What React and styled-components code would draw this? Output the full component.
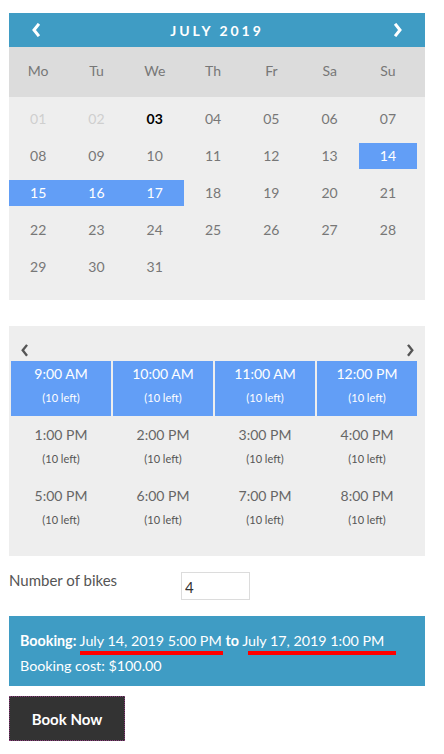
import React from 'react';
import styled, { createGlobalStyle } from 'styled-components';

const GlobalStyle = createGlobalStyle`
  body {
    margin: 0;
    background: #fff;
    font-family: Lato, "Open Sans", sans-serif;
  }
`;

const Page = styled.main`
  width: 416px;
  padding: 13px 19px 0 9px;
`;

const CalHeader = styled.div`
  height: 34px;
  background: #3f9cc4;
  display: flex;
  align-items: center;
  justify-content: space-between;
  padding: 0 22px;
  color: #fff;
`;

const MonthTitle = styled.span`
  font-size: 14px;
  font-weight: 700;
  letter-spacing: 3px;
`;

const DayNames = styled.div`
  height: 50px;
  box-sizing: border-box;
  padding-bottom: 4px;
  background: #dcdcdc;
  display: grid;
  grid-template-columns: repeat(7, 58.3px);
  align-items: center;
`;

const DayName = styled.span`
  text-align: center;
  color: #777;
  font-size: 14px;
`;

const DateGrid = styled.div`
  background: #eeeeee;
  display: grid;
  grid-template-columns: repeat(7, 58.3px);
  grid-auto-rows: 26px;
  row-gap: 11px;
  padding: 9px 0 20px;
`;

const DateCell = styled.span`
  display: flex;
  align-items: center;
  justify-content: center;
  font-size: 14px;
  padding-bottom: 1px;
  background: ${p => (p.$selected ? '#629ef6' : 'transparent')};
  color: ${p => (p.$selected ? '#fff' : p.$past ? '#cfcfcf' : p.$today ? '#000' : '#777')};
  font-weight: ${p => (p.$today ? 700 : 400)};
`;

const TimePanel = styled.div`
  margin-top: 26px;
  background: #eeeeee;
  padding: 14px 8px 18px 2px;
`;

const TimeNav = styled.div`
  display: flex;
  justify-content: space-between;
  align-items: center;
  height: 21px;
  padding: 0 2px 0 9px;
  color: #555;
`;

const SlotGrid = styled.div`
  display: grid;
  grid-template-columns: repeat(4, 100px);
  column-gap: 2px;
  grid-auto-rows: 55px;
  row-gap: 6px;
`;

const Slot = styled.div`
  display: flex;
  flex-direction: column;
  align-items: center;
  padding-top: 4px;
  background: ${p => (p.$selected ? '#629ef6' : 'transparent')};
  color: ${p => (p.$selected ? '#fff' : '#666')};
`;

const SlotTime = styled.span`
  font-size: 14px;
  line-height: 17px;
`;

const SlotLeft = styled.span`
  font-size: 11px;
  margin-top: 9px;
  color: ${p => (p.$selected ? '#fff' : '#555')};
`;

const FieldRow = styled.div`
  display: flex;
  align-items: flex-start;
  padding-top: 16px;
  box-sizing: border-box;
  height: 60px;
`;

const FieldLabel = styled.label`
  width: 172px;
  font-size: 15px;
  color: #555;
  line-height: 18px;
  margin-top: -1px;
`;

const NumberInput = styled.input`
  width: 69px;
  height: 28px;
  box-sizing: border-box;
  border: 1px solid #dcdcdc;
  padding: 2px 3px 0;
  font-family: inherit;
  font-size: 15px;
  color: #333;
`;

const BookingBox = styled.div`
  background: #3f9cc4;
  color: #fff;
  height: 70px;
  box-sizing: border-box;
  padding: 12px 11px;
  font-size: 14.3px;
  line-height: 25px;
`;

const Marked = styled.span`
  position: relative;
  &::after {
    content: '';
    position: absolute;
    left: ${p => p.$left}px;
    right: ${p => p.$right}px;
    top: 19px;
    height: 4px;
    background: #ff0000;
  }
`;

const BookButton = styled.button`
  margin-top: 10px;
  width: 116px;
  height: 45px;
  background: #333;
  color: #fff;
  border: 1px dotted #8a3a7a;
  font-family: inherit;
  font-size: 15px;
  font-weight: 700;
`;

const Chevron = ({ dir, size = 10, width = 3 }) => (
  <svg width={size} height={size * 1.4} viewBox="0 0 10 14" fill="none">
    <polyline
      points={dir === 'left' ? '7,2 3,7 7,12' : '3,2 7,7 3,12'}
      stroke="currentColor"
      strokeWidth={width}
      strokeLinecap="square"
    />
  </svg>
);

const dayNames = ['Mo', 'Tu', 'We', 'Th', 'Fr', 'Sa', 'Su'];
const dates = Array.from({ length: 31 }, (_, i) => i + 1);
const selectedDates = [14, 15, 16, 17];
const slots = ['9:00 AM', '10:00 AM', '11:00 AM', '12:00 PM', '1:00 PM', '2:00 PM', '3:00 PM', '4:00 PM', '5:00 PM', '6:00 PM', '7:00 PM', '8:00 PM'];

export default function App() {
  return (
    <Page>
      <GlobalStyle />
      <CalHeader>
        <Chevron dir="left" />
        <MonthTitle>JULY 2019</MonthTitle>
        <Chevron dir="right" />
      </CalHeader>
      <DayNames>
        {dayNames.map(d => <DayName key={d}>{d}</DayName>)}
      </DayNames>
      <DateGrid>
        {dates.map(d => (
          <DateCell
            key={d}
            $selected={selectedDates.includes(d)}
            $past={d < 3}
            $today={d === 3}
          >
            {String(d).padStart(2, '0')}
          </DateCell>
        ))}
      </DateGrid>

      <TimePanel>
        <TimeNav>
          <Chevron dir="left" size={9} width={2.6} />
          <Chevron dir="right" size={9} width={2.6} />
        </TimeNav>
        <SlotGrid>
          {slots.map((s, i) => (
            <Slot key={s} $selected={i < 4}>
              <SlotTime>{s}</SlotTime>
              <SlotLeft $selected={i < 4}>(10 left)</SlotLeft>
            </Slot>
          ))}
        </SlotGrid>
      </TimePanel>

      <FieldRow>
        <FieldLabel htmlFor="bikes">Number of bikes</FieldLabel>
        <NumberInput id="bikes" type="text" defaultValue="4" />
      </FieldRow>

      <BookingBox>
        <div>
          <b>Booking:</b> <Marked $left={0} $right={-1}>July 14, 2019 5:00 PM</Marked>{' '}
          <b>to</b> <Marked $left={6} $right={-12}>July 17, 2019 1:00 PM</Marked>
        </div>
        <div>Booking cost: $100.00</div>
      </BookingBox>

      <BookButton>Book Now</BookButton>
    </Page>
  );
}
